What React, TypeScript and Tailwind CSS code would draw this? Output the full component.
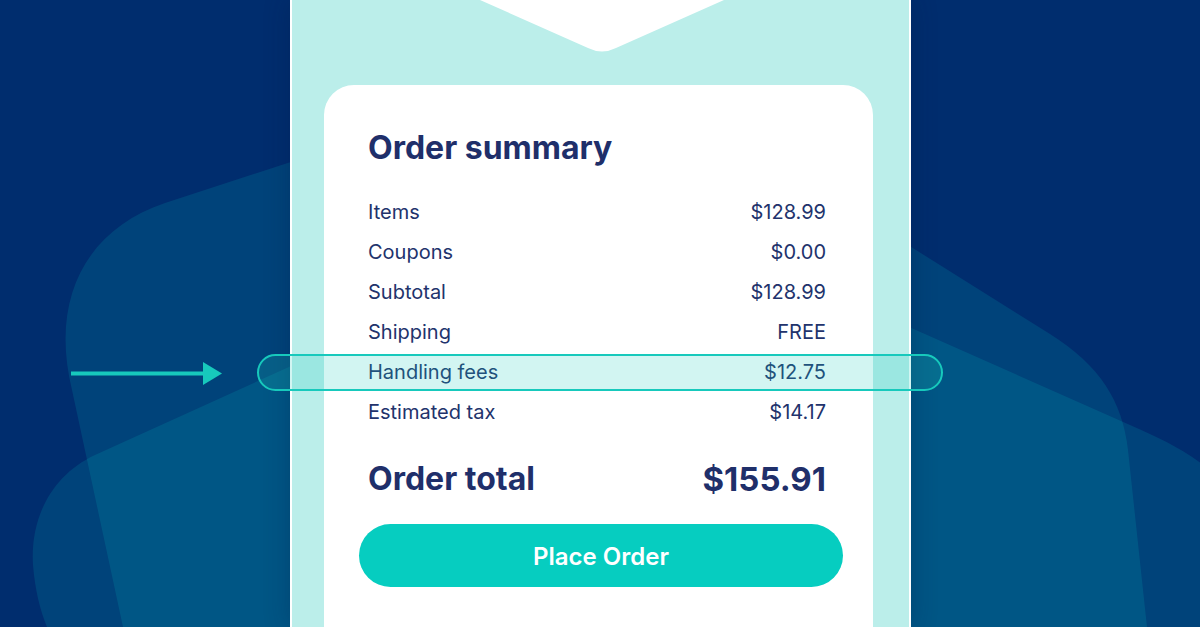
const rows = [
  { label: "Items", value: "$128.99" },
  { label: "Coupons", value: "$0.00" },
  { label: "Subtotal", value: "$128.99" },
  { label: "Shipping", value: "FREE" },
  { label: "Handling fees", value: "$12.75" },
  { label: "Estimated tax", value: "$14.17" },
];

const Backdrop = () => (
  <svg className="absolute inset-0" width="1200" height="627" viewBox="0 0 1200 627">
    {/* left shapes */}
    <path d="M 300 159 L 165 203 C 85 230 50 300 72 390 L 123 627 L 300 627 Z" fill="#00ffe0" fillOpacity="0.105" />
    <path d="M 300 362 L 95 455 C 50 476 30 520 33 565 C 35 590 40 610 47 627 L 300 627 Z" fill="#00ffe0" fillOpacity="0.105" />
    {/* right shapes */}
    <path d="M 900 240 L 1050 334 C 1100 366 1122 400 1128 450 L 1147 627 L 900 627 Z" fill="#00ffe0" fillOpacity="0.105" />
    <path d="M 900 323 L 1130 425 C 1160 438 1185 450 1210 470 L 1210 627 L 900 627 Z" fill="#00ffe0" fillOpacity="0.105" />
  </svg>
);

const SummaryRow = ({ label, value }: { label: string; value: string }) => (
  <div className="flex h-[40px] items-center justify-between text-[20px] leading-[40px] text-[#22336c]">
    <span>{label}</span>
    <span>{value}</span>
  </div>
);

export default function App() {
  return (
    <div
      className="relative h-[627px] w-[1200px] overflow-hidden bg-[#002d6e]"
      style={{ fontFamily: "Inter, 'Noto Sans', sans-serif" }}
    >
      <Backdrop />

      <div className="relative ml-[290px] h-full w-[621px] border-x-2 border-white bg-[#bbeeea] pt-[85px] shadow-[0_0_24px_rgba(0,25,70,0.3)]">
        {/* envelope flap */}
        <svg className="absolute left-0 top-0" width="617" height="70" viewBox="290 0 617 70">
          <path d="M 478 0 L 586 48 Q 600 55 614 48 L 722 0 Z" fill="#ffffff" />
        </svg>

        <div className="ml-[32px] h-[560px] w-[549px] rounded-t-[30px] bg-white pl-[44px] pr-[47px] pt-[43px]">
          <h1 className="text-[32px] font-bold leading-[40px] text-[#1f2f6a]">Order summary</h1>

          <div className="mt-[24px]">
            {rows.map((r) => (
              <SummaryRow key={r.label} label={r.label} value={r.value} />
            ))}
          </div>

          <div className="mt-[27px] flex items-center justify-between text-[32px] font-bold leading-[40px] text-[#1f2f6a]">
            <span>Order total</span>
            <span className="text-[33px]">$155.91</span>
          </div>

          <button className="ml-[-9px] mt-[25px] flex h-[63px] w-[484px] items-center justify-center rounded-full bg-[#06cdc0] pt-[2px] text-[24px] font-semibold text-white">
            Place Order
          </button>
        </div>
      </div>

      {/* highlight on handling fees */}
      <div className="pointer-events-none absolute left-[257px] top-[354px] h-[37px] w-[686px] rounded-full border-2 border-[#17c9bc] bg-[#1ccbbd]/20" />

      {/* pointer arrow */}
      <svg className="absolute left-[70px] top-[360px]" width="156" height="26" viewBox="70 360 156 26">
        <rect x="71" y="371.5" width="135" height="4" fill="#17c9bc" />
        <path d="M 203 362 L 222 373.5 L 203 385 Z" fill="#17c9bc" />
      </svg>
    </div>
  );
}
